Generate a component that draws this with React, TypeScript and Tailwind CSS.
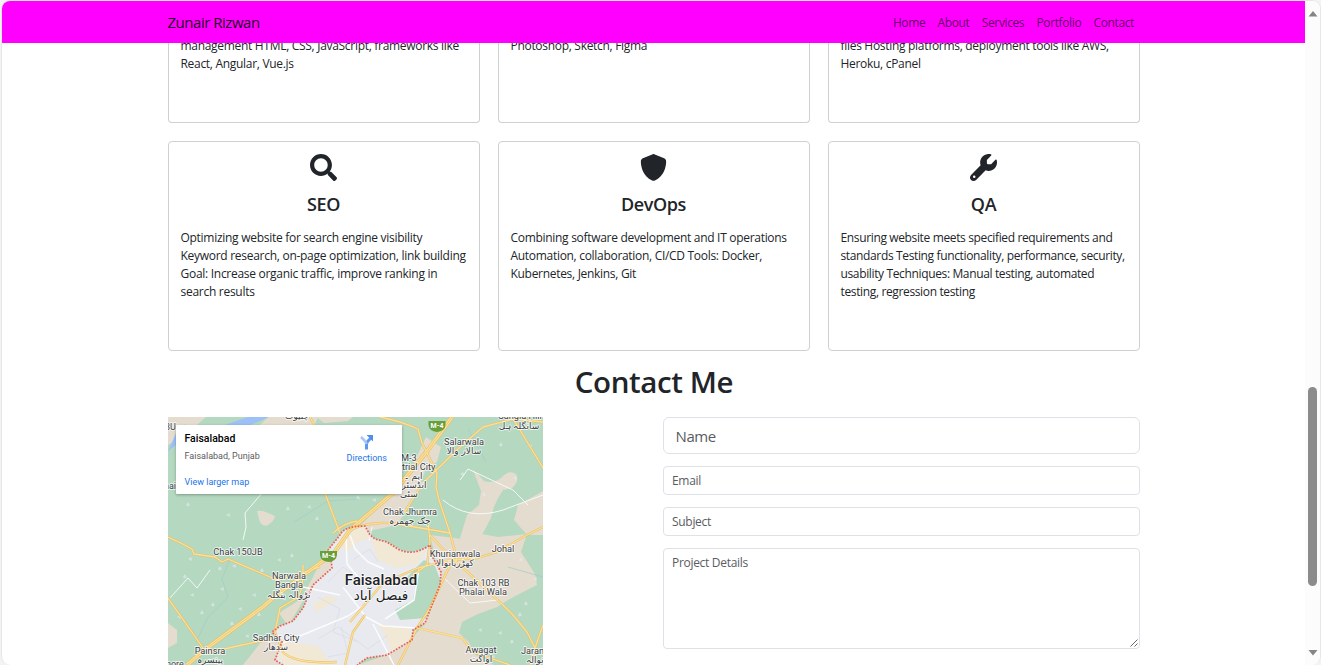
import React from "react";
import { FaShield, FaWrench } from "react-icons/fa6";
import { FaSearch } from "react-icons/fa";

const links = ["Home", "About", "Services", "Portfolio", "Contact"];

const previous = [
  ["management HTML, CSS, JavaScript, frameworks like", "React, Angular, Vue.js"],
  ["Photoshop, Sketch, Figma"],
  ["files Hosting platforms, deployment tools like AWS,", "Heroku, cPanel"],
];

const services = [
  {
    title: "SEO",
    Icon: FaSearch,
    tracking: "tracking-[-0.28px]",
    lines: [
      "Optimizing website for search engine visibility",
      "Keyword research, on-page optimization, link building",
      "Goal: Increase organic traffic, improve ranking in",
      "search results",
    ],
  },
  {
    title: "DevOps",
    Icon: FaShield,
    tracking: "tracking-[-0.3px]",
    lines: [
      "Combining software development and IT operations",
      "Automation, collaboration, CI/CD Tools: Docker,",
      "Kubernetes, Jenkins, Git",
    ],
  },
  {
    title: "QA",
    Icon: FaWrench,
    tracking: "tracking-[-0.36px]",
    lines: [
      "Ensuring website meets specified requirements and",
      "standards Testing functionality, performance, security,",
      "usability Techniques: Manual testing, automated",
      "testing, regression testing",
    ],
  },
];

function Lines({ lines, tracking }: { lines: string[]; tracking: string }) {
  return (
    <p className={`whitespace-nowrap text-[12px] leading-[18px] ${tracking}`}>
      {lines.map((l) => (
        <span key={l} className="block">{l}</span>
      ))}
    </p>
  );
}

const majorRoads = [
  "M284 0 L260 33 L225 76 L182 113 L166 136 L152 146 L105 181 L96 189 L39 231 L19 248",
];

const roads = [
  "M212 0 Q236 5 250 12 L254 26 L269 56 L268 70 L271 83 L282 116 L289 143",
  "M375 5 L345 2 L315 10 L292 30 L255 66 L236 96",
  "M344 0 L375 51",
  "M0 120 Q12 125 24 132 L26 137 L47 140 L54 145 L60 142 L109 163 L121 160 L152 150",
  "M0 181 L35 231",
  "M39 236 L74 228 L109 221",
  "M135 148 L135 160 Q134 176 129 181 L112 191 L107 215 L115 235 Q126 247 169 245",
  "M289 143 L282 148 L262 191 L249 211 L230 248",
  "M249 211 L294 221 L305 235 L342 248",
  "M262 118 L275 132 L292 148 L335 188 L345 198 L359 215 L367 231 L375 208",
  "M375 110 L359 118 L329 135 L309 141 L282 143 L250 151 L215 166 L182 205",
  "M260 105 L262 125 L259 148 L245 158",
  "M152 63 L172 116",
  "M142 0 L152 20",
  "M182 113 Q205 103 229 107 L282 116",
  "M165 116 Q176 106 189 104",
  "M177 248 L185 215 L197 198",
  "M367 231 L362 248",
];

const whites = [
  "M99 63 L94 76 L77 96 L78 110 L75 123",
  "M2 181 L20 161 L29 171 L42 153",
  "M292 63 L300 52 L345 73 L360 88",
  "M178 118 L179 147 L190 160",
  "M182 118 L187 132 L200 145 L216 152",
  "M175 170 L198 200 L215 209 L249 211",
  "M115 226 L180 199 L196 188",
  "M251 152 L246 183 L217 202",
  "M135 170 L172 178",
  "M205 207 L226 248",
  "M275 83 Q300 104 335 93 L375 78",
  "M204 110 L201 124",
  "M275 160 L302 186 L330 183",
];

const specks = [
  [18, 88], [58, 98], [118, 92], [139, 90], [147, 102], [20, 142], [50, 152], [64, 149],
  [92, 154], [22, 178], [43, 188], [9, 200], [62, 207], [77, 219], [89, 198], [84, 178],
  [15, 160], [109, 143], [122, 139], [292, 57], [314, 78], [345, 61], [331, 28], [360, 29],
  [351, 143], [365, 162], [350, 198], [330, 216], [342, 225], [310, 213], [356, 187],
  [323, 240], [188, 81], [204, 83], [216, 98], [70, 192], [32, 196], [52, 172],
] as const;

const labels: { t: string; x: number; y: number; a?: boolean; start?: boolean }[] = [
  { t: "چنیوٹ", x: 129, y: 2, a: true },
  { t: "Sangla Hill", x: 352, y: 2 },
  { t: "سانگلہ ہل", x: 351, y: 12, a: true },
  { t: "Salarwala", x: 296, y: 28 },
  { t: "سالار والا", x: 296, y: 37, a: true },
  { t: "M-3", x: 233, y: 44, start: true },
  { t: "trial City", x: 234, y: 53, start: true },
  { t: "ایم ۔", x: 245, y: 62, a: true },
  { t: "انڈسٹر", x: 246, y: 71, a: true },
  { t: "سٹی", x: 241, y: 80, a: true },
  { t: "Chak Jhumra", x: 242, y: 98 },
  { t: "چک جھمرہ", x: 242, y: 107, a: true },
  { t: "Chak 150JB", x: 70, y: 138 },
  { t: "Narwala", x: 121, y: 162 },
  { t: "Bangla", x: 121, y: 171 },
  { t: "نڑوالہ بنگلہ", x: 121, y: 181, a: true },
  { t: "Sadhar City", x: 108, y: 224 },
  { t: "سدھار", x: 108, y: 233, a: true },
  { t: "Painsra", x: 42, y: 237 },
  { t: "پینسرہ", x: 42, y: 246, a: true },
  { t: "Khurianwala", x: 287, y: 140 },
  { t: "کھڑریانوالا", x: 287, y: 149, a: true },
  { t: "Johal", x: 335, y: 135 },
  { t: "Chak 103 RB", x: 315.5, y: 169 },
  { t: "Phalai Wala", x: 315, y: 178 },
  { t: "Awagat", x: 313, y: 236 },
  { t: "اواگت", x: 313, y: 245, a: true },
  { t: "Jaran", x: 353, y: 237, start: true },
  { t: "نوالہ", x: 367, y: 246, a: true },
];

function RoadShield({ x, y }: { x: number; y: number }) {
  return (
    <g transform={`translate(${x} ${y})`}>
      <path d="M-8.5 -5 H8.5 V-1 Q8 5 0 6 Q-8 5 -8.5 -1 Z" fill="#689f38" />
      <text textAnchor="middle" y="2.3" className="fill-white font-['Roboto',sans-serif] text-[7px] font-bold">M-4</text>
    </g>
  );
}

function MapDrawing() {
  const border =
    "M115 248 L107 243 L110 235 L114 225 L104 215 L112 209 L125 204 L135 191 L145 168 L164 151 L163 142 L160 133 L172 118 Q176 109 197 109 L202 118 L207 122 L219 125 L230 132 Q245 140 262 128 L265 141 L273 155 L272 168 L264 188 L257 206 L245 213 L244 223 L219 238 L199 241 L189 248";
  return (
    <svg viewBox="0 0 375 248" className="block h-[248px] w-[375px]">
      <rect width="375" height="248" fill="#b4d8c0" />
      <g fill="#e4dccf">
        <path d="M0 0 H38 L20 16 L0 28 Z" />
        <path d="M100 0 H150 L142 20 H80 Z" />
        <path d="M258 20 L273 30 L269 45 L258 52 L248 78 L229 108 L182 118 L206 95 L225 76 L240 58 Z" />
        <path d="M89 94 Q94 93 100 96 L107 99 Q106 105 98 109 Q92 108 91 102 Z" />
        <path d="M305 53 Q310 57 316 64 Q325 67 333 61 Q341 52 348 57 Q352 64 344 71 L335 73 Q329 82 326 90 L323 101 L314 118 L297 127 L292 121 L299 98 L311 88 L313 74 Z" />
        <path d="M350 88 L375 74 V118 H359 L346 103 Z" />
        <path d="M262 118 L295 122 L308 116 L330 120 L359 117 L353 135 L367 157 L369 168 L355 175 L340 183 L329 190 L310 197 L294 205 L291 216 L301 225 L306 237 L326 248 H189 L219 238 L240 225 L256 208 L273 165 Z" />
        <path d="M160 130 L166 151 L137 181 L120 209 L111 196 L133 182 L145 160 Z" />
        <path d="M93 225 L109 220 L116 240 L119 248 H75 Z" />
        <path d="M0 206 L9 213 L9 226 L0 231 Z" />
        <path d="M148 0 H185 L180 4 L156 6 Z" />
      </g>
      <path d="M57 8 L80 0 H101 L80 9 Z M0 34 L9 14 L17 7 L8 28 Z" fill="#9cc0f7" />
      <path d={border + " Z"} fill="#e8eaf0" />
      <g fill="#f1e8d5">
        <path d="M202 122 L219 125 L240 137 L258 133 L250 147 L228 151 L210 143 Z" />
        <path d="M187 113 L197 111 L202 121 L190 125 L180 135 L170 127 Z" />
        <path d="M211 207 L243 212 L242 222 L224 235 Z" />
        <path d="M145 187 L160 178 L170 183 L148 195 Z" />
        <path d="M115 224 L150 229 L164 248 H116 L110 238 Z" />
      </g>
      <path d="M256 143 L267 149 L273 165 L258 201 L232 203 L227 193 L245 183 L248 168 L235 164 Z" fill="#b4d8c0" />
      <g fill="#e4eaf0" opacity="0.65">
        {specks.map(([x, y], i) => (
          <path key={i} d={i % 2 ? `M${x} ${y} l3.5 -2 l0.5 4 z` : `M${x} ${y} l2 -3 l2 3.5 l-3 1 z`} />
        ))}
      </g>
      <g fill="none" stroke="#a4cbc8" strokeWidth="0.7">
        <path d="M62 142 L54 162 L60 180 L40 200 L28 225" />
        <path d="M126 105 L160 84 L190 82" />
        <path d="M340 150 L375 160 M300 12 L318 45" />
      </g>
      <g fill="none" stroke="#dadce4" strokeWidth="0.8">
        <path d="M160 165 L175 150 L200 168 M150 180 L172 192 L165 215 L190 225 M150 222 L170 210 L200 232 L220 218 M186 142 L202 132 L210 145 M173 210 L180 236 L160 240" />
      </g>
      <g fill="none" stroke="#fbfcfc" strokeLinejoin="round">
        {whites.map((d, i) => <path key={i} d={d} strokeWidth={i > 2 && i < 10 ? 1.5 : 0.9} />)}
      </g>
      <g fill="none" stroke="#e8be62" strokeLinejoin="round">
        {roads.map((d) => <path key={d} d={d} strokeWidth="2.3" />)}
        {majorRoads.map((d) => <path key={d} d={d} strokeWidth="4.4" />)}
      </g>
      <g fill="none" stroke="#fbe09a" strokeLinejoin="round">
        {roads.map((d) => <path key={d} d={d} strokeWidth="1.3" />)}
        {majorRoads.map((d) => <path key={d} d={d} strokeWidth="3.2" />)}
      </g>
      <path d={majorRoads[0]} fill="none" stroke="#e8be62" strokeWidth="0.7" />
      <path d={border} fill="none" stroke="#ec5f51" strokeWidth="1.7" strokeDasharray="1.7 1.4" />
      <RoadShield x={269} y={9} />
      <RoadShield x={160.5} y={139} />
      <g stroke="#fff" strokeOpacity="0.75" strokeWidth="1.8" paintOrder="stroke" strokeLinejoin="round" fill="#3c4043">
        {labels.map((l) => (
          <text
            key={l.t}
            x={l.x}
            y={l.y}
            textAnchor={l.start ? "start" : "middle"}
            className={l.a ? "font-['DejaVu_Sans',sans-serif] text-[9px]" : "font-['Roboto',sans-serif] text-[9.2px]"}
          >
            {l.t}
          </text>
        ))}
        <text x="-3" y="13" className="font-['Roboto',sans-serif] text-[9px]">3U</text>
        <text x="-4" y="72" className="font-['Roboto',sans-serif] text-[9px]">nai</text>
        <text x="-2" y="250" className="font-['Roboto',sans-serif] text-[9px]">nore</text>
        <text x="213" y="168" textAnchor="middle" fill="#202124" className="font-['Roboto',sans-serif] text-[15px] font-medium">Faisalabad</text>
        <text x="213" y="183" textAnchor="middle" fill="#202124" className="font-['DejaVu_Sans',sans-serif] text-[13.5px]">فیصل آباد</text>
      </g>
    </svg>
  );
}

function Map() {
  return (
    <div className="relative h-[248px] w-[375px] shrink-0 overflow-hidden">
      <MapDrawing />
      <div className="absolute left-2 top-2 flex h-[69px] w-[226px] justify-between rounded-[1px] bg-white pl-[8.5px] pr-[15px] font-['Roboto',sans-serif] shadow-[0_1px_3px_rgba(0,0,0,0.3)]">
        <div className="flex flex-col whitespace-nowrap text-[9px]">
          <span className="mt-[7px] text-[10.5px] font-medium leading-[14px] text-black">Faisalabad</span>
          <span className="mt-[4px] leading-[12px] text-[#5b5b5b]">Faisalabad, Punjab</span>
          <span className="mt-[14px] leading-[12px] text-[#1a73e8]">View larger map</span>
        </div>
        <div className="flex flex-col items-center">
          <svg viewBox="0 0 15 16" className="mt-[9px] h-4 w-[15px]">
            <path d="M7.5 15.5 V10.5 Q7.5 8.5 9 7 L12 4" fill="none" stroke="#5e97f0" strokeWidth="3" />
            <path d="M7.5 10 Q7 8 5 6 L2 3" fill="none" stroke="#a8c7f8" strokeWidth="2.6" />
            <path d="M7.5 1 H14 V7.5 Z" fill="#4d8ef0" />
          </svg>
          <span className="mt-[2px] text-[9px] leading-[12px] text-[#1a73e8]">Directions</span>
        </div>
      </div>
    </div>
  );
}

const field =
  "block w-full rounded-[4px] border border-[#dee2e6] bg-white px-[8px] text-[12px] tracking-[-0.3px] text-[#212529] outline-none placeholder:text-[#595c5f] placeholder:opacity-100";

export default function App() {
  return (
    <div className="h-[665px] w-[1321px] overflow-hidden bg-[#f3f3f3] pl-px font-['Open_Sans',sans-serif] text-[#212529]">
      <div className="flex h-[665px] w-[1320px] overflow-hidden rounded-[9px] border border-b-0 border-[#e6e6e6] bg-white">
        <div className="flex w-[1303px] flex-col">
          <header className="z-10 flex h-[42px] shrink-0 items-center justify-between bg-[#ff00ff] pl-[165.5px] pr-[171px] pt-px">
            <span className="text-[15px] tracking-[-0.48px] text-black/90">Zunair Rizwan</span>
            <nav className="flex gap-[12.3px] text-[12px] tracking-[-0.38px] text-black/65">
              {links.map((l) => <a key={l}>{l}</a>)}
            </nav>
          </header>
          <main className="flex min-h-0 flex-1 flex-col overflow-hidden pl-[166px] pr-[165px]">
            <section className="-mt-[6px] grid shrink-0 grid-cols-[312px_312px_312px] gap-[18px]">
              {previous.map((p) => (
                <div key={p[0]} className="h-[86px] rounded-b-[4px] border border-t-0 border-[#d0d0d1] pl-[11.5px]">
                  <Lines lines={p} tracking="tracking-[-0.3px]" />
                </div>
              ))}
              {services.map(({ title, Icon, tracking, lines }) => (
                <div key={title} className="flex h-[210px] flex-col rounded-[4px] border border-[#d0d0d1] pl-[11.5px] pt-3">
                  <div className="flex flex-col items-center pr-[12.5px]">
                    <Icon className="h-[27px] w-[27px]" />
                    <h5 className="mt-3 text-[18px] font-semibold leading-[22px] tracking-[-0.4px]">{title}</h5>
                  </div>
                  <div className="mt-[14px]">
                    <Lines lines={lines} tracking={tracking} />
                  </div>
                </div>
              ))}
            </section>
            <h1 className="mt-[13px] shrink-0 text-center text-[29.5px] font-semibold leading-9 tracking-[-0.4px]">Contact Me</h1>
            <section className="mt-[17px] flex shrink-0 justify-between">
              <Map />
              <form className="flex w-[477px] flex-col gap-3">
                <input placeholder="Name" className="block h-[37px] w-full rounded-[6px] border border-[#dee2e6] px-[11.5px] text-[15px] tracking-[-0.4px] outline-none placeholder:text-[#595c5f] placeholder:opacity-100" />
                <input placeholder="Email" className={`${field} h-[29px]`} />
                <input placeholder="Subject" className={`${field} h-[29px]`} />
                <div className="relative">
                  <textarea placeholder="Project Details" className={`${field} h-[101px] resize-none py-[5px] leading-[18px]`} />
                  <svg viewBox="0 0 8 8" className="absolute bottom-[2px] right-[2px] h-2 w-2">
                    <path d="M0.5 7.5 L7.5 0.5 M4.5 7.5 L7.5 4.5" stroke="#555" strokeWidth="0.9" />
                  </svg>
                </div>
              </form>
            </section>
          </main>
        </div>
        <aside className="flex w-[15px] flex-col items-center bg-[#fcfcfc]">
          <svg viewBox="0 0 10 6" className="mt-[10px] h-[6px] w-[10px]"><path d="M5 0 L9.5 5.5 H0.5 Z" fill="#858585" /></svg>
          <div className="mt-[370px] h-[199px] w-[9px] rounded-full bg-[#8b8b8b]" />
          <svg viewBox="0 0 10 6" className="mt-[64px] h-[6px] w-[10px]"><path d="M5 5.5 L9.5 0 H0.5 Z" fill="#858585" /></svg>
        </aside>
      </div>
    </div>
  );
}
